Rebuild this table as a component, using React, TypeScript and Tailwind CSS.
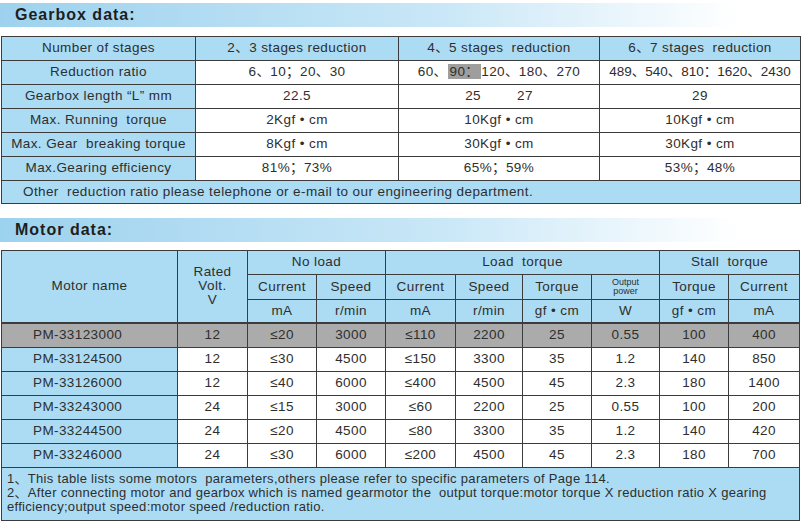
import type { ReactNode } from 'react';

const font = {
  fontFamily: '"Liberation Sans", "Noto Sans CJK SC", Arial, sans-serif',
};

const blue = 'bg-[#abdcf4]';
const base = 'border border-[#3c3c3c] text-center align-middle p-0';
const cell = `${base} whitespace-pre`;

function SectionTitle({ children }: { children: ReactNode }) {
  return (
    <div className="h-[24px] flex items-center pl-[15px] bg-gradient-to-r from-[#9dd2ee] via-[#c9e7f7] via-55% to-white to-92%">
      <span className="text-[16px] font-bold tracking-[1px] text-[#1e1e1e]">
        {children}
      </span>
    </div>
  );
}

const gearRows: [string, ReactNode, ReactNode, ReactNode][] = [
  [
    'Reduction ratio',
    '6、10；20、30',
    <span>
      60、<span className="bg-[#9e9e9e] px-[2px]">90：</span>120、180、270
    </span>,
    <span className="tracking-[0px]">489、540、810：1620、2430</span>,
  ],
  [
    'Gearbox length “L” mm',
    '22.5',
    <span className="inline-flex gap-[36px]">
      <span>25</span>
      <span>27</span>
    </span>,
    '29',
  ],
  ['Max. Running  torque', '2Kgf • cm', '10Kgf • cm', '10Kgf • cm'],
  ['Max. Gear  breaking torque', '8Kgf • cm', '30Kgf • cm', '30Kgf • cm'],
  ['Max.Gearing efficiency', '81%；73%', '65%；59%', '53%；48%'],
];

const motors = [
  ['PM-33123000', '12', '≤20', '3000', '≤110', '2200', '25', '0.55', '100', '400'],
  ['PM-33124500', '12', '≤30', '4500', '≤150', '3300', '35', '1.2', '140', '850'],
  ['PM-33126000', '12', '≤40', '6000', '≤400', '4500', '45', '2.3', '180', '1400'],
  ['PM-33243000', '24', '≤15', '3000', '≤60', '2200', '25', '0.55', '100', '200'],
  ['PM-33244500', '24', '≤20', '4500', '≤80', '3300', '35', '1.2', '140', '420'],
  ['PM-33246000', '24', '≤30', '6000', '≤200', '4500', '45', '2.3', '180', '700'],
];

export default function App() {
  return (
    <div
      className="w-[803px] h-[521px] bg-white text-[#2e2e2e] text-[13.5px] tracking-[0.4px] overflow-hidden"
      style={font}
    >
      <div className="pt-[3px]">
        <SectionTitle>Gearbox data:</SectionTitle>
      </div>

      {/* Gearbox table */}
      <table className="mt-[9px] ml-[1px] table-fixed border-collapse w-[799px]">
        <colgroup>
          <col className="w-[194px]" />
          <col className="w-[203px]" />
          <col className="w-[201px]" />
          <col className="w-[201px]" />
        </colgroup>
        <tbody>
          <tr className={`h-[24px] ${blue}`}>
            <td className={cell}>Number of stages</td>
            <td className={cell}>2、3 stages reduction</td>
            <td className={cell}>4、5 stages  reduction</td>
            <td className={cell}>6、7 stages  reduction</td>
          </tr>
          {gearRows.map((r, i) => (
            <tr key={i} className="h-[24px]">
              <td className={`${cell} ${blue}`}>{r[0]}</td>
              <td className={cell}>{r[1]}</td>
              <td className={cell}>{r[2]}</td>
              <td className={cell}>{r[3]}</td>
            </tr>
          ))}
          <tr className={`h-[23px] ${blue}`}>
            <td colSpan={4} className={`${cell} text-left pl-[21px]`}>
              Other  reduction ratio please telephone or e-mail to our engineering department.
            </td>
          </tr>
        </tbody>
      </table>

      <div className="mt-[14px]">
        <SectionTitle>Motor data:</SectionTitle>
      </div>

      {/* Motor table */}
      <table className="mt-[8px] ml-[1px] table-fixed border-collapse w-[798px]">
        <colgroup>
          <col className="w-[176px]" />
          <col className="w-[70px]" />
          <col className="w-[69px]" />
          <col className="w-[69px]" />
          <col className="w-[70px]" />
          <col className="w-[67px]" />
          <col className="w-[69px]" />
          <col className="w-[68px]" />
          <col className="w-[69px]" />
          <col className="w-[71px]" />
        </colgroup>
        <tbody className={blue}>
          <tr className="h-[24px]">
            <td rowSpan={3} className={cell}>Motor name</td>
            <td rowSpan={3} className={`${base} leading-[14px]`}>
              Rated
              <br />
              Volt.
              <br />V
            </td>
            <td colSpan={2} className={cell}>No load</td>
            <td colSpan={4} className={cell}>Load  torque</td>
            <td colSpan={2} className={cell}>Stall  torque</td>
          </tr>
          <tr className="h-[25px]">
            <td className={cell}>Current</td>
            <td className={cell}>Speed</td>
            <td className={cell}>Current</td>
            <td className={cell}>Speed</td>
            <td className={cell}>Torque</td>
            <td className={`${base} text-[9px] leading-[9px] tracking-[0px]`}>
              Output
              <br />
              power
            </td>
            <td className={cell}>Torque</td>
            <td className={cell}>Current</td>
          </tr>
          <tr className="h-[23px]">
            <td className={cell}>mA</td>
            <td className={cell}>r/min</td>
            <td className={cell}>mA</td>
            <td className={cell}>r/min</td>
            <td className={cell}>gf • cm</td>
            <td className={cell}>W</td>
            <td className={cell}>gf • cm</td>
            <td className={cell}>mA</td>
          </tr>
        </tbody>
        <tbody>
          {motors.map((m, i) => {
            const grey = i === 0;
            return (
              <tr
                key={m[0]}
                className={
                  grey
                    ? 'h-[25px] bg-[#ababab] border-t-2 border-t-[#3c3c3c]'
                    : 'h-[24px]'
                }
              >
                {m.map((v, j) => (
                  <td
                    key={j}
                    className={`${cell} ${
                      j === 0 ? 'text-left pl-[31px]' : ''
                    } ${j === 0 && !grey ? blue : ''}`}
                  >
                    {v}
                  </td>
                ))}
              </tr>
            );
          })}
          <tr className={`h-[53px] ${blue}`}>
            <td
              colSpan={10}
              className={`${base} text-left align-top pl-[5px] pt-[4px] leading-[14px] text-[13px] tracking-[0.3px]`}
            >
              <div className="whitespace-pre">
                1、This table lists some motors  parameters,others please refer to specific parameters of Page 114.
              </div>
              <div className="whitespace-pre">
                2、After connecting motor and gearbox which is named gearmotor the  output torque:motor torque X reduction ratio X gearing
              </div>
              <div className="whitespace-pre">
                efficiency;output speed:motor speed /reduction ratio.
              </div>
            </td>
          </tr>
        </tbody>
      </table>
    </div>
  );
}
